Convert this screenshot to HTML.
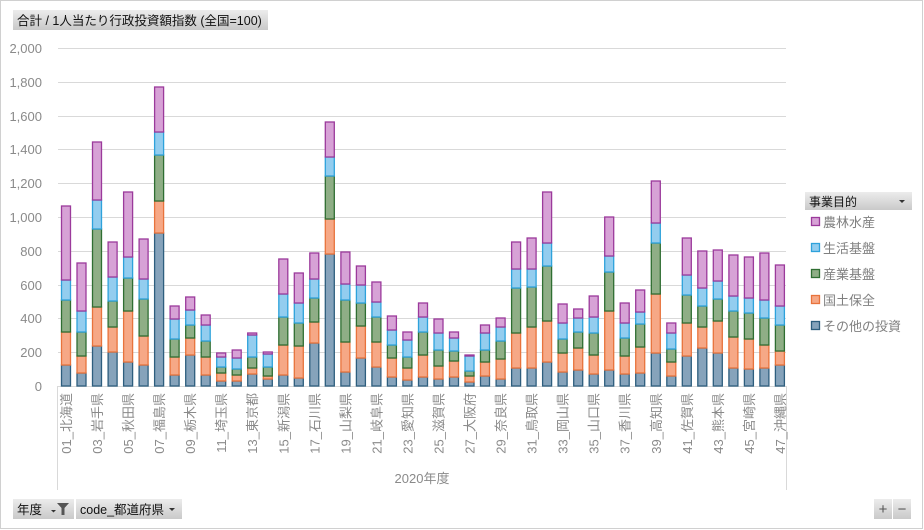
<!DOCTYPE html>
<html><head><meta charset="utf-8"><style>
body{margin:0;background:#fff;width:924px;height:530px;overflow:hidden;font-family:"Liberation Sans","Noto Sans CJK JP",sans-serif}
svg{position:absolute;left:0;top:0}
.a{fill:#86a3bb;stroke:#2e5e7e}.b{fill:#f6a886;stroke:#e8733c}.c{fill:#8fae86;stroke:#2f6e32}.d{fill:#93cdef;stroke:#2ea2db}.e{fill:#d7a2d6;stroke:#9b3a9b}
rect.a,rect.b,rect.c,rect.d,rect.e{stroke-width:1.3}
.yl{font-size:13px;fill:#8a8a8a;text-anchor:end}
.xl{font-size:13px;fill:#8a8a8a;text-anchor:end}
.lg{font-size:13px;fill:#808080}
</style></head><body>
<svg width="924" height="530" xmlns="http://www.w3.org/2000/svg">
<defs><linearGradient id="gb" x1="0" y1="0" x2="0" y2="1"><stop offset="0" stop-color="#ececec"/><stop offset="1" stop-color="#c9c9c9"/></linearGradient></defs>
<rect x="0.5" y="0.5" width="922" height="528" fill="#fff" stroke="#d0d0d0"/>
<rect x="13" y="10" width="255" height="20" fill="url(#gb)"/>
<text x="17" y="25" font-size="12.5" fill="#111">合計 / 1人当たり行政投資額指数 (全国=100)</text>
<g stroke="#d9d9d9" stroke-width="1">
<line x1="58" x2="786" y1="48.5" y2="48.5"/><line x1="58" x2="786" y1="82.5" y2="82.5"/><line x1="58" x2="786" y1="116.5" y2="116.5"/><line x1="58" x2="786" y1="149.5" y2="149.5"/><line x1="58" x2="786" y1="183.5" y2="183.5"/><line x1="58" x2="786" y1="217.5" y2="217.5"/><line x1="58" x2="786" y1="251.5" y2="251.5"/><line x1="58" x2="786" y1="285.5" y2="285.5"/><line x1="58" x2="786" y1="318.5" y2="318.5"/><line x1="58" x2="786" y1="352.5" y2="352.5"/>
<line x1="58" x2="786" y1="386.5" y2="386.5"/>
<line x1="57.5" x2="57.5" y1="386" y2="490"/><line x1="786.5" x2="786.5" y1="386" y2="490"/>
</g>
<g class="yl">
<text x="42" y="53">2,000</text><text x="42" y="87">1,800</text><text x="42" y="121">1,600</text><text x="42" y="154">1,400</text><text x="42" y="188">1,200</text><text x="42" y="222">1,000</text><text x="42" y="256">800</text><text x="42" y="290">600</text><text x="42" y="323">400</text><text x="42" y="357">200</text><text x="42" y="391">0</text>
</g>
<g>
<g transform="translate(66)"><rect class="a" x="-4.5" width="9" y="365" height="21"/><rect class="b" x="-4.5" width="9" y="332" height="33"/><rect class="c" x="-4.5" width="9" y="300" height="32"/><rect class="d" x="-4.5" width="9" y="280" height="20"/><rect class="e" x="-4.5" width="9" y="206" height="74"/></g>
<g transform="translate(81.5)"><rect class="a" x="-4.5" width="9" y="373" height="13"/><rect class="b" x="-4.5" width="9" y="356" height="17"/><rect class="c" x="-4.5" width="9" y="332" height="24"/><rect class="d" x="-4.5" width="9" y="311" height="21"/><rect class="e" x="-4.5" width="9" y="263" height="48"/></g>
<g transform="translate(97)"><rect class="a" x="-4.5" width="9" y="346" height="40"/><rect class="b" x="-4.5" width="9" y="307" height="39"/><rect class="c" x="-4.5" width="9" y="229" height="78"/><rect class="d" x="-4.5" width="9" y="200" height="29"/><rect class="e" x="-4.5" width="9" y="142" height="58"/></g>
<g transform="translate(112.6)"><rect class="a" x="-4.5" width="9" y="352" height="34"/><rect class="b" x="-4.5" width="9" y="327" height="25"/><rect class="c" x="-4.5" width="9" y="301" height="26"/><rect class="d" x="-4.5" width="9" y="277" height="24"/><rect class="e" x="-4.5" width="9" y="242" height="35"/></g>
<g transform="translate(128.1)"><rect class="a" x="-4.5" width="9" y="362" height="24"/><rect class="b" x="-4.5" width="9" y="311" height="51"/><rect class="c" x="-4.5" width="9" y="278" height="33"/><rect class="d" x="-4.5" width="9" y="257" height="21"/><rect class="e" x="-4.5" width="9" y="192" height="65"/></g>
<g transform="translate(143.6)"><rect class="a" x="-4.5" width="9" y="365" height="21"/><rect class="b" x="-4.5" width="9" y="336" height="29"/><rect class="c" x="-4.5" width="9" y="299" height="37"/><rect class="d" x="-4.5" width="9" y="279" height="20"/><rect class="e" x="-4.5" width="9" y="239" height="40"/></g>
<g transform="translate(159.1)"><rect class="a" x="-4.5" width="9" y="233" height="153"/><rect class="b" x="-4.5" width="9" y="201" height="32"/><rect class="c" x="-4.5" width="9" y="155" height="46"/><rect class="d" x="-4.5" width="9" y="132" height="23"/><rect class="e" x="-4.5" width="9" y="87" height="45"/></g>
<g transform="translate(174.6)"><rect class="a" x="-4.5" width="9" y="375" height="11"/><rect class="b" x="-4.5" width="9" y="357" height="18"/><rect class="c" x="-4.5" width="9" y="339" height="18"/><rect class="d" x="-4.5" width="9" y="319" height="20"/><rect class="e" x="-4.5" width="9" y="306" height="13"/></g>
<g transform="translate(190.2)"><rect class="a" x="-4.5" width="9" y="355" height="31"/><rect class="b" x="-4.5" width="9" y="338" height="17"/><rect class="c" x="-4.5" width="9" y="325" height="13"/><rect class="d" x="-4.5" width="9" y="310" height="15"/><rect class="e" x="-4.5" width="9" y="297" height="13"/></g>
<g transform="translate(205.7)"><rect class="a" x="-4.5" width="9" y="375" height="11"/><rect class="b" x="-4.5" width="9" y="357" height="18"/><rect class="c" x="-4.5" width="9" y="341" height="16"/><rect class="d" x="-4.5" width="9" y="325" height="16"/><rect class="e" x="-4.5" width="9" y="315" height="10"/></g>
<g transform="translate(221.2)"><rect class="a" x="-4.5" width="9" y="381" height="5"/><rect class="b" x="-4.5" width="9" y="373" height="8"/><rect class="c" x="-4.5" width="9" y="367" height="6"/><rect class="d" x="-4.5" width="9" y="357" height="10"/><rect class="e" x="-4.5" width="9" y="353" height="4"/></g>
<g transform="translate(236.7)"><rect class="a" x="-4.5" width="9" y="381" height="5"/><rect class="b" x="-4.5" width="9" y="375" height="6"/><rect class="c" x="-4.5" width="9" y="369" height="6"/><rect class="d" x="-4.5" width="9" y="358" height="11"/><rect class="e" x="-4.5" width="9" y="350" height="8"/></g>
<g transform="translate(252.2)"><rect class="a" x="-4.5" width="9" y="374" height="12"/><rect class="b" x="-4.5" width="9" y="368" height="6"/><rect class="c" x="-4.5" width="9" y="357" height="11"/><rect class="d" x="-4.5" width="9" y="335" height="22"/><rect class="e" x="-4.5" width="9" y="333" height="2"/></g>
<g transform="translate(267.8)"><rect class="a" x="-4.5" width="9" y="379" height="7"/><rect class="b" x="-4.5" width="9" y="376" height="3"/><rect class="c" x="-4.5" width="9" y="367" height="9"/><rect class="d" x="-4.5" width="9" y="354" height="13"/><rect class="e" x="-4.5" width="9" y="352" height="2"/></g>
<g transform="translate(283.3)"><rect class="a" x="-4.5" width="9" y="375" height="11"/><rect class="b" x="-4.5" width="9" y="345" height="30"/><rect class="c" x="-4.5" width="9" y="317" height="28"/><rect class="d" x="-4.5" width="9" y="294" height="23"/><rect class="e" x="-4.5" width="9" y="259" height="35"/></g>
<g transform="translate(298.8)"><rect class="a" x="-4.5" width="9" y="378" height="8"/><rect class="b" x="-4.5" width="9" y="346" height="32"/><rect class="c" x="-4.5" width="9" y="323" height="23"/><rect class="d" x="-4.5" width="9" y="303" height="20"/><rect class="e" x="-4.5" width="9" y="273" height="30"/></g>
<g transform="translate(314.3)"><rect class="a" x="-4.5" width="9" y="343" height="43"/><rect class="b" x="-4.5" width="9" y="322" height="21"/><rect class="c" x="-4.5" width="9" y="298" height="24"/><rect class="d" x="-4.5" width="9" y="279" height="19"/><rect class="e" x="-4.5" width="9" y="253" height="26"/></g>
<g transform="translate(329.8)"><rect class="a" x="-4.5" width="9" y="254" height="132"/><rect class="b" x="-4.5" width="9" y="219" height="35"/><rect class="c" x="-4.5" width="9" y="176" height="43"/><rect class="d" x="-4.5" width="9" y="157" height="19"/><rect class="e" x="-4.5" width="9" y="122" height="35"/></g>
<g transform="translate(345.4)"><rect class="a" x="-4.5" width="9" y="372" height="14"/><rect class="b" x="-4.5" width="9" y="342" height="30"/><rect class="c" x="-4.5" width="9" y="300" height="42"/><rect class="d" x="-4.5" width="9" y="284" height="16"/><rect class="e" x="-4.5" width="9" y="252" height="32"/></g>
<g transform="translate(360.9)"><rect class="a" x="-4.5" width="9" y="358" height="28"/><rect class="b" x="-4.5" width="9" y="326" height="32"/><rect class="c" x="-4.5" width="9" y="303" height="23"/><rect class="d" x="-4.5" width="9" y="285" height="18"/><rect class="e" x="-4.5" width="9" y="266" height="19"/></g>
<g transform="translate(376.4)"><rect class="a" x="-4.5" width="9" y="367" height="19"/><rect class="b" x="-4.5" width="9" y="342" height="25"/><rect class="c" x="-4.5" width="9" y="317" height="25"/><rect class="d" x="-4.5" width="9" y="302" height="15"/><rect class="e" x="-4.5" width="9" y="282" height="20"/></g>
<g transform="translate(391.9)"><rect class="a" x="-4.5" width="9" y="377" height="9"/><rect class="b" x="-4.5" width="9" y="358" height="19"/><rect class="c" x="-4.5" width="9" y="345" height="13"/><rect class="d" x="-4.5" width="9" y="330" height="15"/><rect class="e" x="-4.5" width="9" y="316" height="14"/></g>
<g transform="translate(407.4)"><rect class="a" x="-4.5" width="9" y="380" height="6"/><rect class="b" x="-4.5" width="9" y="368" height="12"/><rect class="c" x="-4.5" width="9" y="357" height="11"/><rect class="d" x="-4.5" width="9" y="340" height="17"/><rect class="e" x="-4.5" width="9" y="332" height="8"/></g>
<g transform="translate(423)"><rect class="a" x="-4.5" width="9" y="377" height="9"/><rect class="b" x="-4.5" width="9" y="355" height="22"/><rect class="c" x="-4.5" width="9" y="332" height="23"/><rect class="d" x="-4.5" width="9" y="317" height="15"/><rect class="e" x="-4.5" width="9" y="303" height="14"/></g>
<g transform="translate(438.5)"><rect class="a" x="-4.5" width="9" y="379" height="7"/><rect class="b" x="-4.5" width="9" y="366" height="13"/><rect class="c" x="-4.5" width="9" y="350" height="16"/><rect class="d" x="-4.5" width="9" y="333" height="17"/><rect class="e" x="-4.5" width="9" y="319" height="14"/></g>
<g transform="translate(454)"><rect class="a" x="-4.5" width="9" y="377" height="9"/><rect class="b" x="-4.5" width="9" y="361" height="16"/><rect class="c" x="-4.5" width="9" y="351" height="10"/><rect class="d" x="-4.5" width="9" y="338" height="13"/><rect class="e" x="-4.5" width="9" y="332" height="6"/></g>
<g transform="translate(469.5)"><rect class="a" x="-4.5" width="9" y="382" height="4"/><rect class="b" x="-4.5" width="9" y="376" height="6"/><rect class="c" x="-4.5" width="9" y="371" height="5"/><rect class="d" x="-4.5" width="9" y="356" height="15"/><rect class="e" x="-4.5" width="9" y="355" height="1"/></g>
<g transform="translate(485)"><rect class="a" x="-4.5" width="9" y="376" height="10"/><rect class="b" x="-4.5" width="9" y="362" height="14"/><rect class="c" x="-4.5" width="9" y="350" height="12"/><rect class="d" x="-4.5" width="9" y="333" height="17"/><rect class="e" x="-4.5" width="9" y="325" height="8"/></g>
<g transform="translate(500.6)"><rect class="a" x="-4.5" width="9" y="379" height="7"/><rect class="b" x="-4.5" width="9" y="359" height="20"/><rect class="c" x="-4.5" width="9" y="341" height="18"/><rect class="d" x="-4.5" width="9" y="327" height="14"/><rect class="e" x="-4.5" width="9" y="318" height="9"/></g>
<g transform="translate(516.1)"><rect class="a" x="-4.5" width="9" y="368" height="18"/><rect class="b" x="-4.5" width="9" y="333" height="35"/><rect class="c" x="-4.5" width="9" y="288" height="45"/><rect class="d" x="-4.5" width="9" y="269" height="19"/><rect class="e" x="-4.5" width="9" y="242" height="27"/></g>
<g transform="translate(531.6)"><rect class="a" x="-4.5" width="9" y="368" height="18"/><rect class="b" x="-4.5" width="9" y="327" height="41"/><rect class="c" x="-4.5" width="9" y="287" height="40"/><rect class="d" x="-4.5" width="9" y="269" height="18"/><rect class="e" x="-4.5" width="9" y="238" height="31"/></g>
<g transform="translate(547.1)"><rect class="a" x="-4.5" width="9" y="362" height="24"/><rect class="b" x="-4.5" width="9" y="321" height="41"/><rect class="c" x="-4.5" width="9" y="266" height="55"/><rect class="d" x="-4.5" width="9" y="243" height="23"/><rect class="e" x="-4.5" width="9" y="192" height="51"/></g>
<g transform="translate(562.6)"><rect class="a" x="-4.5" width="9" y="372" height="14"/><rect class="b" x="-4.5" width="9" y="353" height="19"/><rect class="c" x="-4.5" width="9" y="339" height="14"/><rect class="d" x="-4.5" width="9" y="323" height="16"/><rect class="e" x="-4.5" width="9" y="304" height="19"/></g>
<g transform="translate(578.2)"><rect class="a" x="-4.5" width="9" y="370" height="16"/><rect class="b" x="-4.5" width="9" y="348" height="22"/><rect class="c" x="-4.5" width="9" y="332" height="16"/><rect class="d" x="-4.5" width="9" y="318" height="14"/><rect class="e" x="-4.5" width="9" y="309" height="9"/></g>
<g transform="translate(593.7)"><rect class="a" x="-4.5" width="9" y="374" height="12"/><rect class="b" x="-4.5" width="9" y="355" height="19"/><rect class="c" x="-4.5" width="9" y="333" height="22"/><rect class="d" x="-4.5" width="9" y="317" height="16"/><rect class="e" x="-4.5" width="9" y="296" height="21"/></g>
<g transform="translate(609.2)"><rect class="a" x="-4.5" width="9" y="370" height="16"/><rect class="b" x="-4.5" width="9" y="311" height="59"/><rect class="c" x="-4.5" width="9" y="272" height="39"/><rect class="d" x="-4.5" width="9" y="256" height="16"/><rect class="e" x="-4.5" width="9" y="217" height="39"/></g>
<g transform="translate(624.7)"><rect class="a" x="-4.5" width="9" y="374" height="12"/><rect class="b" x="-4.5" width="9" y="356" height="18"/><rect class="c" x="-4.5" width="9" y="338" height="18"/><rect class="d" x="-4.5" width="9" y="323" height="15"/><rect class="e" x="-4.5" width="9" y="303" height="20"/></g>
<g transform="translate(640.2)"><rect class="a" x="-4.5" width="9" y="373" height="13"/><rect class="b" x="-4.5" width="9" y="347" height="26"/><rect class="c" x="-4.5" width="9" y="324" height="23"/><rect class="d" x="-4.5" width="9" y="312" height="12"/><rect class="e" x="-4.5" width="9" y="290" height="22"/></g>
<g transform="translate(655.8)"><rect class="a" x="-4.5" width="9" y="353" height="33"/><rect class="b" x="-4.5" width="9" y="294" height="59"/><rect class="c" x="-4.5" width="9" y="243" height="51"/><rect class="d" x="-4.5" width="9" y="223" height="20"/><rect class="e" x="-4.5" width="9" y="181" height="42"/></g>
<g transform="translate(671.3)"><rect class="a" x="-4.5" width="9" y="376" height="10"/><rect class="b" x="-4.5" width="9" y="362" height="14"/><rect class="c" x="-4.5" width="9" y="349" height="13"/><rect class="d" x="-4.5" width="9" y="333" height="16"/><rect class="e" x="-4.5" width="9" y="323" height="10"/></g>
<g transform="translate(686.8)"><rect class="a" x="-4.5" width="9" y="356" height="30"/><rect class="b" x="-4.5" width="9" y="323" height="33"/><rect class="c" x="-4.5" width="9" y="295" height="28"/><rect class="d" x="-4.5" width="9" y="275" height="20"/><rect class="e" x="-4.5" width="9" y="238" height="37"/></g>
<g transform="translate(702.3)"><rect class="a" x="-4.5" width="9" y="348" height="38"/><rect class="b" x="-4.5" width="9" y="327" height="21"/><rect class="c" x="-4.5" width="9" y="306" height="21"/><rect class="d" x="-4.5" width="9" y="288" height="18"/><rect class="e" x="-4.5" width="9" y="251" height="37"/></g>
<g transform="translate(717.8)"><rect class="a" x="-4.5" width="9" y="353" height="33"/><rect class="b" x="-4.5" width="9" y="321" height="32"/><rect class="c" x="-4.5" width="9" y="299" height="22"/><rect class="d" x="-4.5" width="9" y="281" height="18"/><rect class="e" x="-4.5" width="9" y="250" height="31"/></g>
<g transform="translate(733.4)"><rect class="a" x="-4.5" width="9" y="368" height="18"/><rect class="b" x="-4.5" width="9" y="337" height="31"/><rect class="c" x="-4.5" width="9" y="311" height="26"/><rect class="d" x="-4.5" width="9" y="296" height="15"/><rect class="e" x="-4.5" width="9" y="255" height="41"/></g>
<g transform="translate(748.9)"><rect class="a" x="-4.5" width="9" y="369" height="17"/><rect class="b" x="-4.5" width="9" y="339" height="30"/><rect class="c" x="-4.5" width="9" y="313" height="26"/><rect class="d" x="-4.5" width="9" y="298" height="15"/><rect class="e" x="-4.5" width="9" y="257" height="41"/></g>
<g transform="translate(764.4)"><rect class="a" x="-4.5" width="9" y="368" height="18"/><rect class="b" x="-4.5" width="9" y="345" height="23"/><rect class="c" x="-4.5" width="9" y="318" height="27"/><rect class="d" x="-4.5" width="9" y="300" height="18"/><rect class="e" x="-4.5" width="9" y="253" height="47"/></g>
<g transform="translate(779.9)"><rect class="a" x="-4.5" width="9" y="365" height="21"/><rect class="b" x="-4.5" width="9" y="351" height="14"/><rect class="c" x="-4.5" width="9" y="325" height="26"/><rect class="d" x="-4.5" width="9" y="306" height="19"/><rect class="e" x="-4.5" width="9" y="265" height="41"/></g>
</g>
<g class="xl">
<text transform="translate(71,393) rotate(-90)">01_北海道</text>
<text transform="translate(102,393) rotate(-90)">03_岩手県</text>
<text transform="translate(133.1,393) rotate(-90)">05_秋田県</text>
<text transform="translate(164.1,393) rotate(-90)">07_福島県</text>
<text transform="translate(195.2,393) rotate(-90)">09_栃木県</text>
<text transform="translate(226.2,393) rotate(-90)">11_埼玉県</text>
<text transform="translate(257.2,393) rotate(-90)">13_東京都</text>
<text transform="translate(288.3,393) rotate(-90)">15_新潟県</text>
<text transform="translate(319.3,393) rotate(-90)">17_石川県</text>
<text transform="translate(350.4,393) rotate(-90)">19_山梨県</text>
<text transform="translate(381.4,393) rotate(-90)">21_岐阜県</text>
<text transform="translate(412.4,393) rotate(-90)">23_愛知県</text>
<text transform="translate(443.5,393) rotate(-90)">25_滋賀県</text>
<text transform="translate(474.5,393) rotate(-90)">27_大阪府</text>
<text transform="translate(505.6,393) rotate(-90)">29_奈良県</text>
<text transform="translate(536.6,393) rotate(-90)">31_鳥取県</text>
<text transform="translate(567.6,393) rotate(-90)">33_岡山県</text>
<text transform="translate(598.7,393) rotate(-90)">35_山口県</text>
<text transform="translate(629.7,393) rotate(-90)">37_香川県</text>
<text transform="translate(660.8,393) rotate(-90)">39_高知県</text>
<text transform="translate(691.8,393) rotate(-90)">41_佐賀県</text>
<text transform="translate(722.8,393) rotate(-90)">43_熊本県</text>
<text transform="translate(753.9,393) rotate(-90)">45_宮崎県</text>
<text transform="translate(784.9,393) rotate(-90)">47_沖縄県</text>
</g>
<text x="422" y="483" font-size="13" fill="#8a8a8a" text-anchor="middle">2020年度</text>
<rect x="805" y="192" width="107" height="18" fill="url(#gb)"/>
<text x="809" y="206" font-size="12" fill="#111">事業目的</text>
<path d="M899 200h6l-3 3z" fill="#333"/>
<rect class="e" x="811.5" y="217.5" width="8" height="8"/><text class="lg" x="823" y="227">農林水産</text>
<rect class="d" x="811.5" y="243.5" width="8" height="8"/><text class="lg" x="823" y="253">生活基盤</text>
<rect class="c" x="811.5" y="269.5" width="8" height="8"/><text class="lg" x="823" y="279">産業基盤</text>
<rect class="b" x="811.5" y="295.5" width="8" height="8"/><text class="lg" x="823" y="305">国土保全</text>
<rect class="a" x="811.5" y="321.5" width="8" height="8"/><text class="lg" x="823" y="331">その他の投資</text>
<rect x="13" y="499" width="61" height="20" fill="url(#gb)"/>
<text x="17" y="514" font-size="12.5" fill="#111">年度</text>
<path d="M51 510h5l-2.5 2.5z" fill="#333"/>
<path d="M57 503h12l-4.5 5v7h-3v-7z" fill="#555"/>
<rect x="76" y="499" width="106" height="20" fill="url(#gb)"/>
<text x="80" y="514" font-size="12.5" fill="#111">code_都道府県</text>
<path d="M169 508h6l-3 3z" fill="#333"/>
<rect x="874" y="499" width="18" height="20" fill="url(#gb)"/>
<rect x="893" y="499" width="18" height="20" fill="url(#gb)"/>
<text x="883" y="514" font-size="15" fill="#555" text-anchor="middle">+</text>
<text x="902" y="514" font-size="15" fill="#555" text-anchor="middle">−</text>
</svg>
</body></html>
